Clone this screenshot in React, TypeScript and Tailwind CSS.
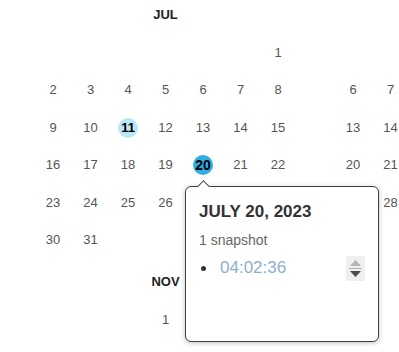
import React from 'react';

type Mark = 'light' | 'strong';

const MONTHS = ['JAN', 'FEB', 'MAR', 'APR', 'MAY', 'JUN', 'JUL', 'AUG', 'SEP', 'OCT', 'NOV', 'DEC'];

// days with snapshots (month is 0-based)
const marks: Record<string, Mark> = {
  '2023-6-11': 'light',
  '2023-6-20': 'strong',
};

const buildWeeks = (year: number, month: number) => {
  const first = new Date(year, month, 1).getDay();
  const count = new Date(year, month + 1, 0).getDate();
  const cells: (number | null)[] = Array(first).fill(null);
  for (let d = 1; d <= count; d++) cells.push(d);
  while (cells.length % 7 !== 0) cells.push(null);
  return cells;
};

const DayCell: React.FC<{ day: number | null; mark?: Mark }> = ({ day, mark }) => {
  if (day === null) return <div className="h-[37.5px]" />;
  return (
    <div className="h-[37.5px] flex items-center justify-center">
      {mark === 'strong' ? (
        <span className="w-5 h-5 rounded-full bg-[#2eaee6] flex items-center justify-center text-[14px] font-bold text-black">
          {day}
        </span>
      ) : mark === 'light' ? (
        <span className="w-5 h-5 rounded-full bg-[#bde6f4] flex items-center justify-center text-[13px] font-bold text-black">
          {day}
        </span>
      ) : (
        <span className="text-[13px] text-[#555]">{day}</span>
      )}
    </div>
  );
};

const MonthView: React.FC<{ year: number; month: number }> = ({ year, month }) => {
  const cells = buildWeeks(year, month);
  return (
    <div className="w-[300px] shrink-0 px-[18.75px] pb-[8.25px]">
      <div className="h-[30px] flex items-center justify-center text-[13px] font-bold text-[#222]">
        {MONTHS[month]}
      </div>
      <div className="grid grid-cols-7 mt-[3.75px]">
        {cells.map((d, i) => (
          <DayCell key={i} day={d} mark={d ? marks[`${year}-${month}-${d}`] : undefined} />
        ))}
      </div>
    </div>
  );
};

const Spinner: React.FC = () => (
  <div className="w-[19px] h-[25px] bg-[#efefef] flex flex-col items-center justify-center gap-[2px]">
    <svg width="11" height="6" viewBox="0 0 11 6">
      <path d="M5.5 0 L11 6 L0 6 Z" fill="#b5b5b5" />
    </svg>
    <div className="w-[13px] h-px bg-[#b0b0b0]" />
    <svg width="11" height="6" viewBox="0 0 11 6">
      <path d="M0 0 L11 0 L5.5 6 Z" fill="#4a4a4a" />
    </svg>
  </div>
);

export default function App() {
  return (
    <div
      className="relative w-[399px] h-[352px] overflow-hidden bg-white"
      style={{ fontFamily: '"Liberation Sans", Arial, sans-serif' }}
    >
      <div className="flex pl-[15.5px]">
        <MonthView year={2023} month={6} />
        <MonthView year={2023} month={7} />
      </div>
      <div className="flex pl-[15.5px]">
        <MonthView year={2023} month={10} />
        <MonthView year={2023} month={11} />
      </div>

      {/* Day popover */}
      <div className="absolute left-[185px] top-[186px] w-[194px] h-[156px] bg-white border border-[#3f3f3f] rounded-[6px] shadow-[0_1px_5px_rgba(0,0,0,0.25)] pt-[15px] px-[13px]">
        <div className="absolute -top-[5.5px] left-[13px] w-[9px] h-[9px] rotate-45 bg-white border-l border-t border-[#3f3f3f]" />
        <div className="text-[17px] leading-[20px] font-bold text-[#333]">JULY 20, 2023</div>
        <div className="mt-[8px] text-[14px] leading-[20px] text-[#666]">1 snapshot</div>
        <div className="mt-[6px] h-[24px] flex items-center">
          <span className="ml-[1.5px] w-[5px] h-[5px] rounded-full bg-[#333]" />
          <span className="ml-[14.5px] text-[17px] text-[#8eaecd]">04:02:36</span>
          <div className="ml-auto">
            <Spinner />
          </div>
        </div>
      </div>
    </div>
  );
}
